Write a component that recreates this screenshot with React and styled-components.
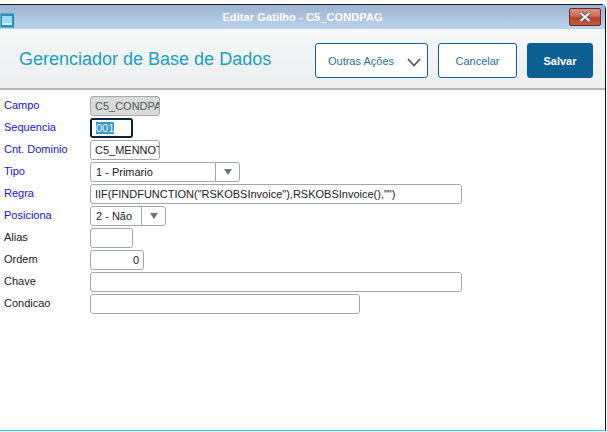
import React from "react"
import styled, { createGlobalStyle } from "styled-components"

const GlobalStyle = createGlobalStyle`
  html, body {
    margin: 0;
    padding: 0;
    background: #fff;
  }
  body {
    font-family: Arial, "Liberation Sans", sans-serif;
    font-size: 12px;
  }
`

const Screen = styled.div`
  width: 607px;
  height: 432px;
  padding-top: 4px;
  box-sizing: border-box;
  background: #fff;
  overflow: hidden;
`

const Window = styled.div`
  width: 606px;
  height: 427px;
  box-sizing: border-box;
  background: #fff;
  border-top: 1px solid #1d1d1d;
  border-right: 1px solid #101010;
  border-bottom: 1px solid #22d3ee;
  border-top-right-radius: 5px;
  display: flex;
  flex-direction: column;
`

const TitleBar = styled.div`
  position: relative;
  height: 24px;
  flex: none;
  background: linear-gradient(#9db3d2, #bcd4ec);
  display: flex;
  align-items: center;
  justify-content: center;
  color: #fff;
  font-size: 11px;
  font-weight: 700;
  letter-spacing: 0.1px;
`

const AppIcon = styled.svg`
  position: absolute;
  left: 0;
  top: 8px;
`

const CloseButton = styled.div`
  position: absolute;
  right: 4px;
  top: 3px;
  width: 32px;
  height: 18px;
  box-sizing: border-box;
  border: 1px solid #6b2a2a;
  border-radius: 2px;
  background: linear-gradient(#dc9080 0%, #c96a57 45%, #b8412c 55%, #c45a44 100%);
  display: flex;
  align-items: center;
  justify-content: center;
`

const Header = styled.header`
  height: 61px;
  flex: none;
  box-sizing: border-box;
  border-bottom: 2px solid #b5b7b9;
  background: linear-gradient(#f6f7f7, #eeeff1);
  display: flex;
  align-items: center;
  padding: 4px 12px 0 19px;
`

const PageTitle = styled.h1`
  flex: 1;
  margin: 0 0 2px;
  color: #1a9fc4;
  font-size: 18px;
  font-weight: 400;
`

const Actions = styled.div`
  display: flex;
  gap: 10px;
`

const ActionButton = styled.button`
  width: ${p => p.$width}px;
  height: 35px;
  box-sizing: border-box;
  padding: 0;
  border: 1px solid #0c5f93;
  border-radius: 3px;
  background: ${p => (p.$primary ? "#0c5f93" : "#fff")};
  color: ${p => (p.$primary ? "#fff" : "#2a6f9e")};
  font-family: inherit;
  font-size: 11px;
  font-weight: ${p => (p.$primary ? 700 : 400)};
  display: flex;
  align-items: center;
  justify-content: center;
`

const MenuButton = styled(ActionButton)`
  padding-left: 6px;
  gap: 13px;
`

const Chevron = styled.svg`
  margin-top: 3px;
`

const Form = styled.div`
  display: flex;
  flex-direction: column;
  gap: 2px;
  padding: 6px 0 0 4px;
`

const Row = styled.div`
  display: flex;
  align-items: center;
  height: 20px;
`

const Label = styled.label`
  width: 86px;
  flex: none;
  margin-top: -3px;
  font-size: 11px;
  color: ${p => (p.$required ? "#1414e6" : "#222")};
`

const Field = styled.div`
  width: ${p => p.$width}px;
  height: 20px;
  box-sizing: border-box;
  border: ${p => (p.$focused ? "2px solid #0d2436" : "1px solid #a3a9ab")};
  border-radius: 3px;
  background: ${p => (p.$disabled ? "#d9dbdb" : "#fff")};
  color: ${p => (p.$disabled ? "#555" : "#222")};
  padding: 0 4px;
  font-size: 11px;
  display: flex;
  align-items: center;
  justify-content: ${p => (p.$right ? "flex-end" : "flex-start")};
  overflow: hidden;
  white-space: nowrap;
`

const Selected = styled.span`
  background: #3a9bc4;
  color: #e8f4f8;
`

const SelectBox = styled.div`
  width: ${p => p.$width}px;
  height: 20px;
  box-sizing: border-box;
  border: 1px solid #a3a9ab;
  border-radius: 3px;
  background: #fff;
  color: #222;
  font-size: 11px;
  display: flex;
  align-items: center;
`

const SelectValue = styled.span`
  flex: 1;
  padding-left: 5px;
`

const SelectArrow = styled.div`
  width: 23px;
  height: 100%;
  flex: none;
  border-left: 1px solid #a3a9ab;
  display: flex;
  align-items: center;
  justify-content: center;
  &::after {
    content: "";
    border-left: 4.5px solid transparent;
    border-right: 4.5px solid transparent;
    border-top: 6px solid #6e7378;
  }
`

const App = () => (
  <Screen>
    <GlobalStyle />
    <Window>
      <TitleBar>
        <AppIcon width="15" height="15" viewBox="0 0 15 15">
          <rect x="0" y="0" width="14.5" height="15" rx="1" fill="#2e8fae" stroke="#8fc6da" strokeWidth="1" />
          <rect x="2" y="3" width="10" height="7" fill="#9fd8ee" />
          <rect x="2" y="10" width="10" height="2" fill="#d8eef6" />
        </AppIcon>
        Editar Gatilho - C5_CONDPAG
        <CloseButton>
          <svg width="16" height="12" viewBox="0 0 16 12">
            <path d="M3.5 2 L12.5 10 M12.5 2 L3.5 10" stroke="#5a5a5a" strokeWidth="3.8" />
            <path d="M3.5 2 L12.5 10 M12.5 2 L3.5 10" stroke="#f1f1f1" strokeWidth="2.2" />
          </svg>
        </CloseButton>
      </TitleBar>
      <Header>
        <PageTitle>Gerenciador de Base de Dados</PageTitle>
        <Actions>
          <MenuButton $width={113}>
            Outras Ações
            <Chevron width="14" height="9" viewBox="0 0 14 9">
              <path d="M1 1 L7 7.5 L13 1" fill="none" stroke="#555" strokeWidth="1.8" />
            </Chevron>
          </MenuButton>
          <ActionButton $width={79}>Cancelar</ActionButton>
          <ActionButton $width={66} $primary>Salvar</ActionButton>
        </Actions>
      </Header>
      <Form>
        <Row>
          <Label $required>Campo</Label>
          <Field $width={70} $disabled>C5_CONDPAG</Field>
        </Row>
        <Row>
          <Label $required>Sequencia</Label>
          <Field $width={43} $focused><Selected>001</Selected></Field>
        </Row>
        <Row>
          <Label $required>Cnt. Dominio</Label>
          <Field $width={70}>C5_MENNOTA</Field>
        </Row>
        <Row>
          <Label $required>Tipo</Label>
          <SelectBox $width={150}>
            <SelectValue>1 - Primario</SelectValue>
            <SelectArrow />
          </SelectBox>
        </Row>
        <Row>
          <Label $required>Regra</Label>
          <Field $width={372}>IIF(FINDFUNCTION("RSKOBSInvoice"),RSKOBSInvoice(),"")</Field>
        </Row>
        <Row>
          <Label $required>Posiciona</Label>
          <SelectBox $width={76}>
            <SelectValue>2 - Não</SelectValue>
            <SelectArrow />
          </SelectBox>
        </Row>
        <Row>
          <Label>Alias</Label>
          <Field $width={43} />
        </Row>
        <Row>
          <Label>Ordem</Label>
          <Field $width={54} $right>0</Field>
        </Row>
        <Row>
          <Label>Chave</Label>
          <Field $width={372} />
        </Row>
        <Row>
          <Label>Condicao</Label>
          <Field $width={270} />
        </Row>
      </Form>
    </Window>
  </Screen>
)

export default App
